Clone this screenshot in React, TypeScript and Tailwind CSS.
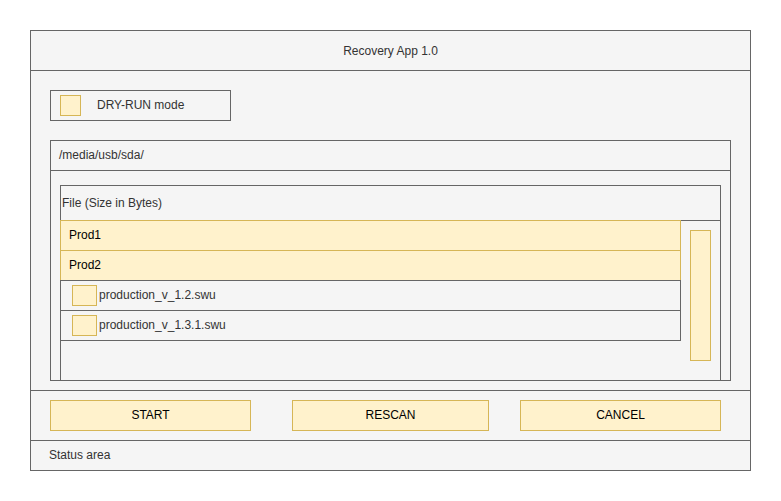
import React from 'react';

const files = ['production_v_1.2.swu', 'production_v_1.3.1.swu'];
const groups = ['Prod1', 'Prod2'];

const App: React.FC = () => {
  return (
    <div
      className="min-h-screen bg-white pt-[30px] pl-[30px] text-[12px]"
      style={{ fontFamily: '"Liberation Sans", Arial, sans-serif' }}
    >
      <div className="w-[721px] border border-[#666666] bg-[#f5f5f5] flex flex-col">
        {/* title */}
        <div className="h-[40px] border-b border-[#666666] flex items-center justify-center text-[#333333]">
          Recovery App 1.0
        </div>

        {/* main area */}
        <div className="h-[320px] border-b border-[#666666] pl-[19px] pr-[19px] pt-[19px] flex flex-col">
          <div className="w-[181px] h-[31px] border border-[#666666] flex items-center pl-[9px]">
            <div className="w-[21px] h-[21px] border border-[#d6b656] bg-[#fff2cc]" />
            <span className="ml-[16px] mb-[2px] text-[#333333]">DRY-RUN mode</span>
          </div>

          <div className="mt-[19px] h-[241px] border border-[#666666] flex flex-col">
            <div className="h-[30px] border-b border-[#666666] pl-[8px] pb-[2px] flex items-center text-[#333333]">
              /media/usb/sda/
            </div>
            <div className="flex-1 px-[9px] pt-[14px] flex flex-col">
              <div className="flex-1 border-x border-t border-[#666666] flex flex-col">
                <div className="h-[34px] flex items-center pl-[1px] text-[#333333]">
                  File (Size in Bytes)
                </div>
                <div className="flex-1 flex">
                  <div className="w-[621px] -ml-px flex flex-col">
                    {groups.map((g, i) => (
                      <div
                        key={g}
                        className={`h-[31px] border border-[#d6b656] bg-[#fff2cc] flex items-center pl-[8px] pb-[2px] text-black ${i > 0 ? '-mt-px' : ''}`}
                      >
                        {g}
                      </div>
                    ))}
                    {files.map((f) => (
                      <div
                        key={f}
                        className="h-[31px] -mt-px border border-[#666666] bg-[#f5f5f5] flex items-center pl-[11px] text-[#333333]"
                      >
                        <div className="w-[25px] h-[21px] border border-[#d6b656] bg-[#fff2cc]" />
                        <span className="ml-[2px] mb-[2px]">{f}</span>
                      </div>
                    ))}
                  </div>
                  <div className="flex-1 border-t border-[#666666] pl-[9px] pt-[9px]">
                    <div className="w-[21px] h-[131px] border border-[#d6b656] bg-[#fff2cc]" />
                  </div>
                </div>
              </div>
            </div>
          </div>
        </div>

        {/* buttons */}
        <div className="h-[50px] border-b border-[#666666] flex items-center pl-[19px] text-black">
          <button className="w-[201px] h-[31px] pb-[2px] border border-[#d6b656] bg-[#fff2cc]">START</button>
          <button className="ml-[41px] w-[197px] h-[31px] pb-[2px] border border-[#d6b656] bg-[#fff2cc]">RESCAN</button>
          <button className="ml-[31px] w-[201px] h-[31px] pb-[2px] border border-[#d6b656] bg-[#fff2cc]">CANCEL</button>
        </div>

        {/* status */}
        <div className="h-[29px] flex items-center pl-[18px] pb-[2px] text-[#333333]">Status area</div>
      </div>
    </div>
  );
};

export default App;
